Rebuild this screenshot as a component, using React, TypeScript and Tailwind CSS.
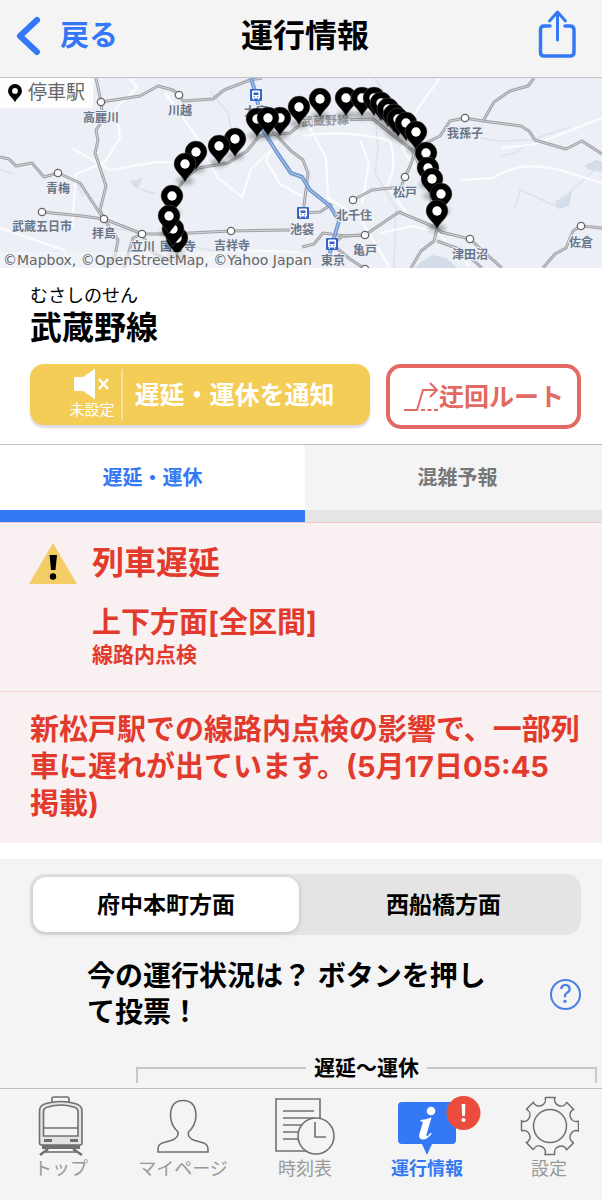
import React from "react";

const pins: [number, number][] = [
  [346, 20], [362, 20], [374, 20], [320, 21], [381, 25], [299, 29], [388, 31],
  [394, 37], [280, 40], [257, 41], [268, 40], [398, 41], [406, 45], [416, 54],
  [235, 61], [219, 68], [196, 74], [426, 75], [185, 86], [428, 90], [432, 101],
  [441, 116], [172, 118], [437, 133],
  [177, 160], [173, 151], [169, 138],
];

const rails = [
  "M96,0 L101,24 L103,42 L96,52 L98,62 L95,75 L106,108 L100,132 L104,141",
  "M101,24 L140,18 L158,8 L173,12 L179,17 L183,23 L213,21 L224,12 L250,2 L262,0",
  "M0,79 L9,81 L16,88 L32,85 L44,99 L58,95 L80,105 L101,137 L104,141",
  "M42,134 L82,138 L104,141 L135,153 L142,156 L170,156 L231,153 L290,152",
  "M104,141 L118,162 L115,178 L104,190",
  "M142,156 L133,160 L124,190",
  "M142,156 L152,174 L172,184",
  "M176,160 L172,118 L186,100 L198,90 L228,85 L247,73 L259,58 L290,55 L305,43 L373,41 L390,55 L412,72 L428,105 L437,150",
  "M270,50 L290,72 L303,82 L308,95 L306,112 L303,135 L320,134 L332,126",
  "M405,99 L411,86 L416,70 L440,58 L450,43 L465,40 L483,43 L521,48 L529,53 L535,62 L566,71 L582,63 L602,76",
  "M483,43 L494,24 L510,13 L528,8 L534,0",
  "M405,99 L401,109 L372,112 L353,122",
  "M302,169 L314,166 L323,155 L345,158 L365,157 L399,134 L437,150 L441,154 L470,161 L485,175 L502,190",
  "M332,166 L343,158 L365,157",
  "M334,168 L350,181 L365,191",
  "M437,150 L434,163 L421,173 L411,190",
  "M437,163 L462,172 L482,190",
  "M543,190 L555,176 L566,170 L573,153 L581,148 L602,150",
];

const roads = [
  "M130,0 L137,10 L116,30 L120,60 L105,84 L76,96 L72,150",
  "M165,15 L196,58 L204,76 L218,100 L242,119 L251,91 L270,73",
  "M72,70 L110,92 L156,84 L186,85",
  "M0,150 L64,172 L70,190",
  "M302,58 Q350,51 390,63 Q398,90 387,107 L410,140",
  "M310,50 L326,80 L328,120 L360,140 L390,190",
  "M360,62 L369,85 L362,125",
  "M440,0 L418,30 L402,70 L425,105",
  "M461,102 L493,100 Q520,82 560,92 L602,105",
  "M502,70 L536,66 L602,40",
  "M380,155 L412,148 L437,154 L470,188",
  "M280,58 L266,82 L280,106 L302,118",
  "M200,185 L230,172 L300,174",
];

const rivers = [
  "M210,13 L228,35 L233,60",
  "M110,150 L160,156 L190,168 L240,178 L310,186",
  "M375,0 L392,26 L376,45 L378,70 L375,95 L396,130 L394,190",
  "M480,60 L500,63 L530,62 L570,49",
  "M515,130 L520,112 L556,128 L574,110 L602,86",
  "M0,92 L14,96",
  "M75,98 L80,112 L83,118",
  "M500,78 L516,75 L525,66",
];

const stations: [number, number][] = [
  [101, 24], [179, 17], [58, 95], [42, 134], [104, 141], [142, 156], [231, 153],
  [465, 40], [405, 99], [353, 122], [365, 157], [470, 161], [581, 148], [365, 191],
];

const hubs: [number, number][] = [[256, 17], [303, 135], [332, 166]];

const places: [string, number, number][] = [
  ["高麗川", 101, 44], ["川越", 180, 37], ["青梅", 58, 115], ["武蔵五日市", 42, 153],
  ["拝島", 104, 160], ["立川", 143, 173], ["国分寺", 178, 173], ["吉祥寺", 232, 172],
  ["池袋", 302, 156], ["大宮", 256, 38], ["我孫子", 465, 60], ["松戸", 405, 119],
  ["北千住", 354, 142], ["亀戸", 365, 177], ["東京", 333, 187], ["津田沼", 470, 181],
  ["佐倉", 581, 169],
];

const PIN = "M0,18 C-3,11 -11,7 -11,0 A11,11 0 0 1 11,0 C11,7 3,11 0,18Z";

function RouteMap() {
  return (
    <svg viewBox="0 0 602 190" className="block w-full" role="img" aria-label="武蔵野線の路線図">
      <defs>
        <filter id="soft" x="-50%" y="-50%" width="200%" height="200%">
          <feGaussianBlur stdDeviation="2" />
        </filter>
      </defs>
      <rect width="602" height="190" fill="#eceff6" />
      <path d="M421,184 L432,177 L446,180 L458,190 L414,190Z" fill="#d3dde9" />
      <path d="M584,88 L596,82 L602,84 L602,94 L590,92Z" fill="#d3dde9" />
      <path d="M555,124 L572,113 L569,128 L558,131Z" fill="#d3dde9" />
      <path d="M130,103 L143,100 L138,110 L156,115 L154,117 L134,109Z" fill="#d9dfe9" />
      <g fill="none" strokeLinejoin="round">
        {rivers.map((d) => <path key={d} d={d} stroke="#dbe2ec" strokeWidth="1.5" />)}
        {roads.map((d) => <path key={d} d={d} stroke="#fbfcfe" strokeWidth="2.2" />)}
        {rails.map((d) => (
          <g key={d}>
            <path d={d} stroke="#a0a1a4" strokeWidth="3" />
            <path d={d} stroke="#d3d4d7" strokeWidth="1" />
          </g>
        ))}
        <path d="M251,0 L256,17 L264,54 L278,76 L291,95 L302,99 L310,112 L330,128 L339,143 L334,160 L329,178" stroke="#6f98d3" strokeWidth="4" />
        <path d="M251,0 L256,17 L264,54 L278,76 L291,95 L302,99 L310,112 L330,128 L339,143 L334,160 L329,178" stroke="#b9cdea" strokeWidth="1" />
      </g>
      {stations.map(([x, y]) => (
        <circle key={`${x}-${y}`} cx={x} cy={y} r="3.7" fill="#fff" stroke="#666" strokeWidth="1.3" />
      ))}
      {hubs.map(([x, y]) => (
        <g key={`${x}-${y}`} transform={`translate(${x} ${y})`}>
          <rect x="-6" y="-6" width="12" height="12" rx="1" fill="#3564c6" />
          <path d="M-3.5,-4 H3.5 V3 H-3.5Z M-3,5 L-2,3 M3,5 L2,3" fill="#fff" stroke="#fff" />
          <path d="M-2.5,-2.5 H2.5 V0 H-2.5Z" fill="#3564c6" />
          <circle cx="-1.7" cy="1.6" r=".7" fill="#3564c6" />
          <circle cx="1.7" cy="1.6" r=".7" fill="#3564c6" />
        </g>
      ))}
      <g fill="#6a7588" stroke="#eef1f7" strokeWidth="2" paintOrder="stroke" textAnchor="middle" fontSize="12" fontWeight="700">
        {places.map(([name, x, y]) => <text key={name} x={x} y={y}>{name}</text>)}
        <text x="325" y="47" fill="#96999f" transform="rotate(-3 325 43)">武蔵野線</text>
      </g>
      <g fill="#000" opacity=".28" filter="url(#soft)">
        {pins.map(([x, y]) => <ellipse key={`${x}-${y}`} cx={x} cy={y + 17} rx="9" ry="4" />)}
      </g>
      {pins.map(([x, y]) => (
        <g key={`${x}-${y}`} transform={`translate(${x} ${y})`}>
          <path d={PIN} fill="#000" stroke="#777" strokeWidth=".4" />
          <circle r="4.7" fill="#fff" />
        </g>
      ))}
    </svg>
  );
}

function TrainIcon() {
  return (
    <svg viewBox="0 0 50 62" className="h-[62px] w-[50px]" fill="none" stroke="#707070" strokeWidth="1.6" aria-hidden="true">
      <path d="M16,7 V3 Q16,2 18,2 H31 Q33,2 33,4 V7" />
      <path d="M3.5,48 V16 Q3.5,10 10,8.500 Q25,4.500 39,8.500 Q46,10 46,16 V48 Q46,50 44,50 H5.500 Q3.500,50 3.500,48Z" fill="#e3e3e3" />
      <path d="M7.500,41 V17 Q7.500,13 12,12 Q25,8 37.500,12 Q42,13 42,17 V41Z" fill="#f4f4f4" />
      <path d="M7.500,33 H42" />
      <path d="M8,44 H16 V47 H8Z M34,44 H42 V47 H34Z M6,50 H44 V54 H6Z" fill="#707070" stroke="none" />
      <path d="M12,54 L4,60 M37,54 L46,60" strokeWidth="2.500" />
      <path d="M9,57 H41" />
    </svg>
  );
}

function PersonIcon() {
  return (
    <svg viewBox="0 0 56 62" className="h-[62px] w-[56px]" fill="none" stroke="#707070" strokeWidth="1.6" aria-hidden="true">
      <path d="M3,57 V54 Q3,49 9,47.500 L16,45.500 Q24,43 23,37 Q15.500,30 15.500,20 Q16,5.500 28,5.500 Q40.500,5.500 41,20 Q41,30 33.500,37 Q32,43 40,45.500 L47,47.500 Q53,49 53,54 V57Z" />
    </svg>
  );
}

function TimetableIcon() {
  return (
    <svg viewBox="0 0 60 62" className="h-[62px] w-[60px]" fill="none" stroke="#707070" strokeWidth="1.6" aria-hidden="true">
      <path d="M1,4 H45 V56 H1Z M8,16 H39 M8,23 H39 M8,30 H39 M8,37 H28 M8,44 H28" />
      <circle cx="41" cy="41" r="18" fill="#f4f4f4" />
      <path d="M40,27 V42 H51" />
    </svg>
  );
}

function InfoIcon() {
  return (
    <svg viewBox="0 0 58 62" className="h-[62px] w-[58px] overflow-visible" aria-hidden="true">
      <path d="M4,7 H54 Q58,7 58,11 V45 Q58,49 54,49 H34 L29,60 L24,49 H4 Q0,49 0,45 V11 Q0,7 4,7Z" fill="#3478f6" />
      <circle cx="33" cy="16" r="4.300" fill="#fff" />
      <path d="M22.500,25 Q28,24.500 33.500,22.500 L28.500,39.500 Q28.200,42.500 30.500,40.300 L32.500,37.700 L33.800,38.700 Q29,44.800 24.500,44.500 Q20,44 21.500,38.500 L24.700,28 Q25.200,26.300 22.500,26.300Z" fill="#fff" />
      <circle cx="65.500" cy="18" r="17" fill="#eb4d3d" />
      <path d="M63.600,9 H67.400 L66.900,21 H64.100Z" fill="#fff" />
      <circle cx="65.500" cy="25" r="2.100" fill="#fff" />
    </svg>
  );
}

function GearIcon() {
  return (
    <svg viewBox="-31 -31 60 62" className="h-[62px] w-[60px]" fill="none" stroke="#707070" strokeWidth="1.5" aria-hidden="true">
      {[0, 45, 90, 135, 180, 225, 270, 315].map((angle) => (
        <path key={angle} transform={`rotate(${angle})`} d="M-5,-28.500 H5 C1.900,-21.100 13.500,-16.300 16.600,-23.700" />
      ))}
      <circle r="16.500" />
    </svg>
  );
}

const navItems = [
  { label: "トップ", icon: <TrainIcon />, style: "flex-[122] text-[#999]" },
  { label: "マイページ", icon: <PersonIcon />, style: "flex-[122] text-[#999]" },
  { label: "時刻表", icon: <TimetableIcon />, style: "flex-[122] text-[#999]" },
  { label: "運行情報", icon: <InfoIcon />, style: "flex-[122] font-bold text-[#3478f6]", active: true },
  { label: "設定", icon: <GearIcon />, style: "flex-[106] pl-2 text-[#999]" },
];

export default function App() {
  return (
    <div className="flex min-h-screen flex-col bg-white font-[Inter,'Noto_Sans_CJK_JP',sans-serif] text-black" lang="ja">
      <header className="grid h-[78px] grid-cols-[1fr_auto_1fr] items-center border-b border-[#bfc3c9] bg-[#f4f4f4] pr-4 pb-1.5 pl-6">
        <a href="#back" className="-ml-2 flex items-center gap-5 text-[29px] leading-10 font-bold text-[#3478f6]">
          <svg viewBox="0 0 24 40" className="h-10 w-6" fill="none" stroke="#3478f6" strokeWidth="6" strokeLinecap="round" strokeLinejoin="round" aria-hidden="true">
            <path d="M21,4 L4,20 L21,36" />
          </svg>
          戻る
        </a>
        <h1 className="text-center text-[32px] leading-10 font-bold">運行情報</h1>
        <button aria-label="共有" className="mr-2 -mt-1 justify-self-end">
          <svg viewBox="0 0 40 50" className="block h-[50px] w-10" fill="none" stroke="#3478f6" strokeWidth="3.500" strokeLinecap="round" strokeLinejoin="round" aria-hidden="true">
            <path d="M12,17 H6 Q2.500,17 2.500,21 V43 Q2.500,47 6,47 H32 Q36,47 36,43 V21 Q36,17 32,17 H27" />
            <path d="M19.500,31 V4 M11.500,12 L19.500,3 L27.500,12" strokeWidth="3" />
          </svg>
        </button>
      </header>

      <section className="relative">
        <RouteMap />
        <div className="absolute top-0 left-0 flex h-[30px] items-center gap-1.5 bg-white/90 pr-2 pl-2 text-[19px] leading-7 text-[#666]">
          <svg viewBox="-11 -11 22 30" className="h-[19px] w-3.5" aria-hidden="true">
            <path d={PIN} fill="#000" />
            <circle r="4.500" fill="#fff" />
          </svg>
          停車駅
        </div>
        <p className="absolute bottom-0 left-0 bg-[#f3f5f9]/60 pl-[3px] font-['DejaVu_Sans',sans-serif] text-[14px] leading-4 text-[#666]">
          ©Mapbox, ©OpenStreetMap, ©Yahoo Japan
        </p>
      </section>

      <section className="pt-4 pr-[21px] pb-[15px] pl-[30px]">
        <p className="text-[18px] leading-6">むさしのせん</p>
        <h2 className="text-[32px] leading-10 font-bold">武蔵野線</h2>
        <div className="mt-4 flex gap-4">
          <button className="flex h-[61px] flex-[336] items-center justify-center rounded-[14px] bg-[#f4cd56] pl-1 text-white shadow-[0_3px_2px_#dedae2]">
            <span className="flex h-[51px] flex-col items-center border-r-2 border-[#f8e09a] pr-1.5">
              <svg viewBox="0 0 36 30" className="h-[30px] w-9" aria-hidden="true">
                <path d="M0,9 Q0,8 1,8 H9 L21,0 V30 L9,22 H1 Q0,22 0,21Z" fill="#fff" />
                <path d="M25,10 L34,20 M34,10 L25,20" stroke="#fff" strokeWidth="2.500" />
              </svg>
              <span className="text-[15px] leading-[21px]">未設定</span>
            </span>
            <span className="ml-3 text-[25px] leading-9 font-bold whitespace-nowrap">遅延・運休を通知</span>
          </button>
          <button className="flex h-[65px] flex-[187] items-center justify-center rounded-[15px] border-4 border-[#e26a62] text-[25px] leading-9 font-bold whitespace-nowrap text-[#e26a62]">
            <svg viewBox="0 0 36 32" className="h-8 w-9" fill="none" stroke="#e26a62" strokeWidth="2" aria-hidden="true">
              <path d="M1,29 H14 L20,9 H34 M27,2 L34,9 L27,16" />
              <path d="M18,29 H35" strokeDasharray="4 2.500" />
            </svg>
            迂回ルート
          </button>
        </div>
      </section>

      <div role="tablist" className="flex border-t border-[#c0c0c0] text-[20px] leading-8 font-bold">
        <button role="tab" aria-selected="true" className="h-[77px] flex-[305] border-b-[12px] border-[#3478f6] text-[#3478f6]">遅延・運休</button>
        <button role="tab" aria-selected="false" className="h-[77px] flex-[289] border-b-[12px] border-[#e5e5e5] bg-[#f4f4f4] pl-2 text-[#777]">混雑予報</button>
      </div>

      <section className="border-t border-[#f2c9ca] bg-[#f9f0f1] text-[#e23a2c]">
        <div className="flex h-[169px] items-start gap-[15px] border-b border-[#f2d5d7] px-[29px] pt-5">
          <svg viewBox="0 0 48 41" className="h-[41px] w-12 shrink-0" aria-hidden="true">
            <path d="M24,0 L48,41 H0Z" fill="#f5cd67" />
            <path d="M20.500,12 H28 L26.500,27 H22Z" fill="#000" />
            <circle cx="24" cy="33.500" r="3.200" fill="#000" />
          </svg>
          <div>
            <h3 className="text-[32px] leading-10 font-bold">列車遅延</h3>
            <p className="mt-5 text-[29px] leading-10 font-bold">上下方面[全区間]</p>
            <p className="text-[21px] leading-6 font-bold">線路内点検</p>
          </div>
        </div>
        <p className="pt-[19px] pr-4 pb-[21px] pl-[30px] text-[29px] leading-[37px] font-bold">
          新松戸駅での線路内点検の影響で、一部列車に遅れが出ています。(5月17日05:45<span className="inline-block">掲載)</span>
        </p>
      </section>

      <section className="mt-4 flex-1 border-t border-[#eee] bg-[#f4f4f4] pt-3.5">
        <div className="mr-[21px] ml-[30px] flex h-[61px] rounded-[15px] bg-[#e4e4e4] p-[3px] text-[23px] leading-8 font-bold">
          <button aria-pressed="true" className="flex-[266] rounded-[13px] bg-white shadow-[0_1px_5px_#bbb]">府中本町方面</button>
          <button aria-pressed="false" className="flex-[269] pl-2.5">西船橋方面</button>
        </div>
        <div className="mt-[23px] mr-[21px] ml-[87px] flex items-center justify-between">
          <h3 className="w-[410px] text-[28px] leading-9 font-bold">今の運行状況は？ ボタンを押して投票！</h3>
          <button aria-label="ヘルプ" className="flex size-[31px] items-center justify-center rounded-full border-2 border-[#4a7fe8] text-[25px] leading-7 text-[#4a7fe8]">?</button>
        </div>
        <div className="mt-6 mr-[5px] ml-[136px] flex h-[29px] items-start gap-2">
          <div className="mt-[13px] h-4 flex-1 border-t-2 border-l-2 border-[#c8c8c8]" />
          <h4 className="text-[21px] leading-7 font-bold">遅延〜運休</h4>
          <div className="mt-[13px] h-4 flex-1 border-t-2 border-r-2 border-[#c8c8c8]" />
        </div>
      </section>

      <nav className="sticky bottom-0 flex h-28 border-t border-[#c0c0c0] bg-[#f4f4f4] pt-1.5">
        {navItems.map((item) => (
          <a
            key={item.label}
            href="#nav"
            aria-current={item.active ? "page" : undefined}
            className={`flex flex-col items-center text-[18px] leading-6 ${item.style}`}
          >
            {item.icon}
            <span>{item.label}</span>
          </a>
        ))}
      </nav>
    </div>
  );
}
